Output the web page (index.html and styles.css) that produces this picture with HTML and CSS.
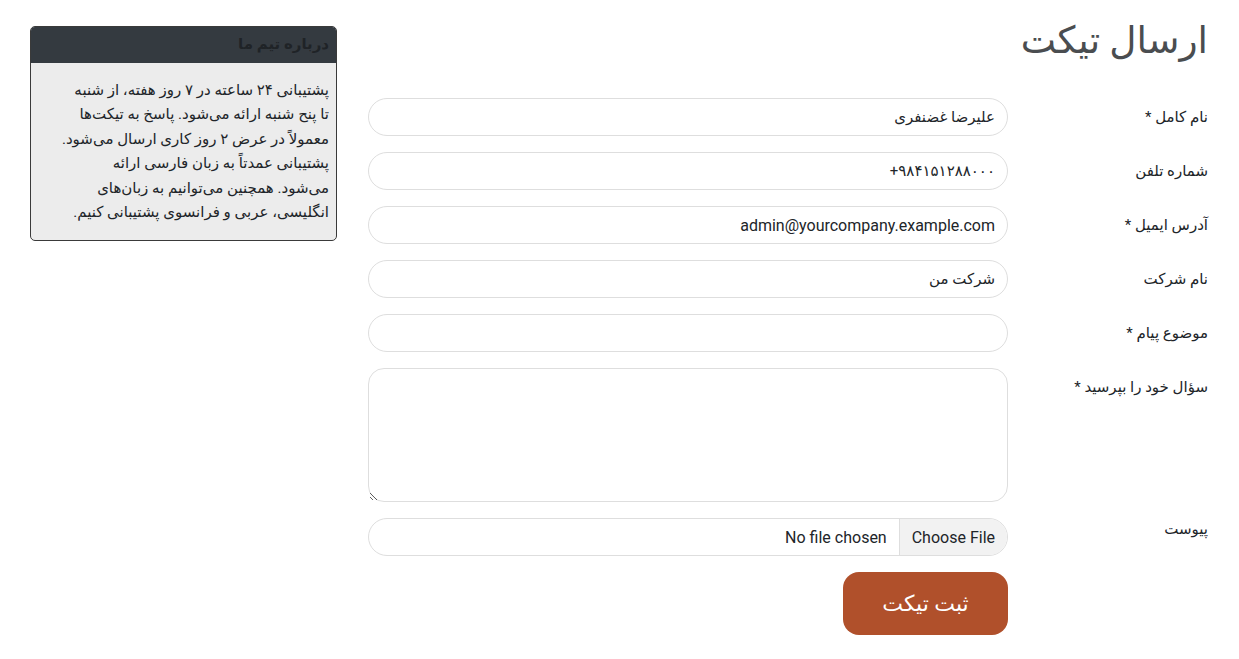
FILE: index.html
```html
<!DOCTYPE html>
<html lang="fa" dir="rtl">
<head>
<meta charset="utf-8">
<title>ارسال تیکت</title>
<link rel="stylesheet" href="styles.css">
</head>
<body>
<div class="page">
  <main class="main">
    <h1 class="title">ارسال تیکت</h1>
    <form class="form">
      <label class="lbl">نام کامل *</label>
      <div class="field"><input class="inp" type="text" value="علیرضا غضنفری"></div>
      <label class="lbl">شماره تلفن</label>
      <div class="field"><input class="inp inp-ltr" type="text" dir="ltr" value="+۹۸۴۱۵۱۲۸۸۰۰۰"></div>
      <label class="lbl">آدرس ایمیل *</label>
      <div class="field"><input class="inp inp-latin" type="text" value="admin@yourcompany.example.com"></div>
      <label class="lbl">نام شرکت</label>
      <div class="field"><input class="inp" type="text" value="شرکت من"></div>
      <label class="lbl">موضوع پیام *</label>
      <div class="field"><input class="inp" type="text" value=""></div>
      <label class="lbl">سؤال خود را بپرسید *</label>
      <div class="field"><textarea class="ta"></textarea></div>
      <label class="lbl lbl-file">پیوست</label>
      <div class="field">
        <div class="file">
          <span class="file-btn">Choose File</span>
          <span class="file-name">No file chosen</span>
        </div>
      </div>
      <div class="spacer"></div>
      <div class="field"><button type="button" class="submit">ثبت تیکت</button></div>
    </form>
  </main>
  <aside class="side">
    <div class="card">
      <div class="card-head">درباره تیم ما</div>
      <div class="card-body">
        <span class="line">پشتیبانی ۲۴ ساعته در ۷ روز هفته، از شنبه</span>
        <span class="line">تا پنح شنبه ارائه می‌شود. پاسخ به تیکت‌ها</span>
        <span class="line">معمولاً در عرض ۲ روز کاری ارسال می‌شود.</span>
        <span class="line">پشتیبانی عمدتاً به زبان فارسی ارائه</span>
        <span class="line">می‌شود. همچنین می‌توانیم به زبان‌های</span>
        <span class="line">انگلیسی، عربی و فرانسوی پشتیبانی کنیم.</span>
      </div>
    </div>
  </aside>
</div>
</body>
</html>
```

FILE: styles.css
```css
* { box-sizing: border-box; }
html, body { margin: 0; padding: 0; background: #fff; }
body {
  font-family: Roboto, "DejaVu Sans", sans-serif;
  font-size: 15px;
  color: #212529;
  direction: rtl;
}
.page {
  display: flex;
  padding: 0 31px 0 30px;
  gap: 31px;
}
.main { flex: 1; }
.side { width: 308px; padding-top: 26px; }

.title {
  margin: 18px 0 0;
  font-size: 37.5px;
  font-weight: normal;
  color: #4a4d50;
  line-height: 44px;
}
.form {
  margin-top: 36px;
  display: grid;
  grid-template-columns: 200px 640px;
  row-gap: 16px;
}
.lbl {
  padding-top: 8px;
  font-size: 15px;
  line-height: 22px;
  color: #212529;
}
.lbl-file { padding-top: 0; }
.inp {
  display: block;
  width: 640px;
  height: 38px;
  border: 1px solid #dedede;
  border-radius: 19px;
  padding: 0 12px;
  font-family: Roboto, "DejaVu Sans", sans-serif;
  font-size: 15px;
  color: #212529;
  background: #fff;
  direction: rtl;
  outline: none;
}
.inp-ltr { direction: ltr; text-align: right; }
.inp-latin { font-size: 16px; }
.ta {
  display: block;
  width: 640px;
  height: 134px;
  border: 1px solid #dedede;
  border-radius: 16px;
  resize: vertical;
  outline: none;
  font-family: inherit;
}
.file {
  display: flex;
  width: 640px;
  height: 38px;
  border: 1px solid #dedede;
  border-radius: 19px;
  overflow: hidden;
  align-items: stretch;
}
.file-btn {
  display: flex;
  align-items: center;
  padding: 0 12px;
  background: #f2f2f2;
  border-left: 1px solid #dedede;
  font-size: 16px;
  color: #212529;
}
.file-name {
  display: flex;
  align-items: center;
  padding: 0 12px;
  font-size: 16px;
  color: #212529;
}
.submit {
  display: block;
  width: 165px;
  height: 63px;
  border: none;
  border-radius: 16px;
  background: #b0502b;
  color: #fff;
  font-family: Roboto, "DejaVu Sans", sans-serif;
  font-size: 22px;
  cursor: pointer;
}

.card {
  border: 1px solid #3a3a3a;
  border-radius: 5px;
  overflow: hidden;
  background: #ececec;
}
.card-head {
  background: #343a40;
  color: #1f2327;
  font-weight: bold;
  font-size: 15px;
  height: 36px;
  line-height: 34px;
  padding: 0 7px;
}
.card-body {
  padding: 15px 7px 16px;
  font-size: 15px;
  line-height: 24.4px;
  color: #212529;
}
.line {
  display: block;
  white-space: nowrap;
}
```
